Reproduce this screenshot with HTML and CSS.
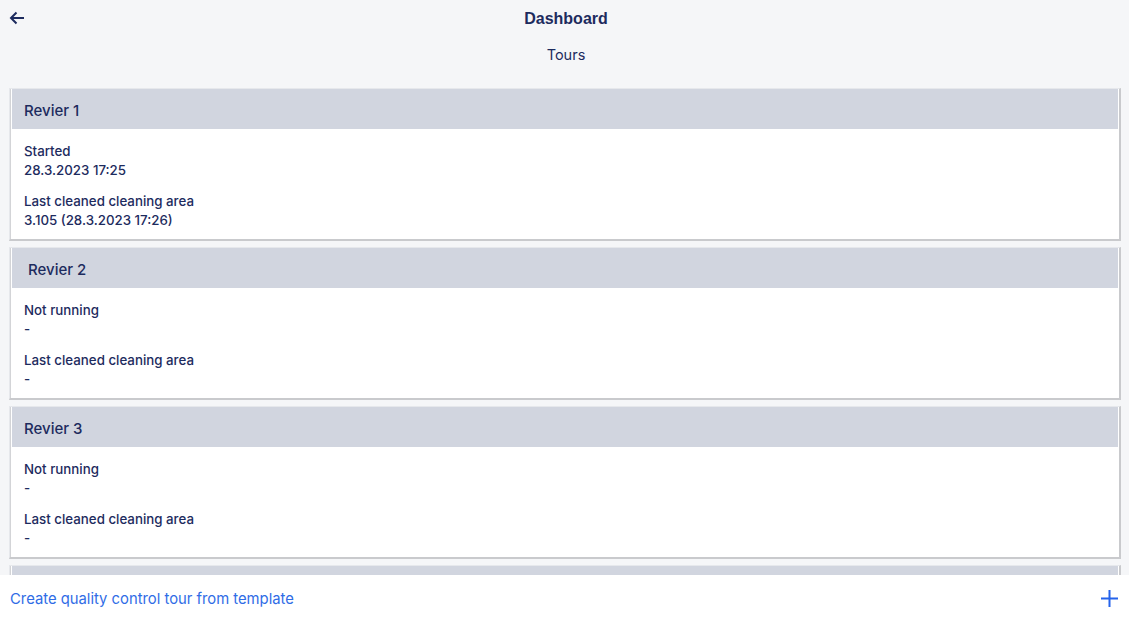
FILE: index.html
```html
<!DOCTYPE html>
<html lang="en">
<head>
    <meta charset="UTF-8">
    <meta name="viewport" content="width=device-width, initial-scale=1.0">
    <title>Dashboard</title>
    <link rel="stylesheet" href="styles.css">
</head>
<body>
<div class="topbar">
    <button class="back" aria-label="Back">
        <svg width="16" height="14" viewBox="0 0 16 14"><path d="M15 7H2M7.5 1.5L2 7l5.5 5.5" fill="none" stroke="#1d2b5e" stroke-width="2"/></svg>
    </button>
    <h1>Dashboard</h1>
</div>
<div class="subtitle">Tours</div>

<div class="list">
    <div class="card">
        <div class="card-head">Revier 1</div>
        <div class="card-body">
            <div class="field">
                <div>Started</div>
                <div>28.3.2023 17:25</div>
            </div>
            <div class="field">
                <div>Last cleaned cleaning area</div>
                <div>3.105 (28.3.2023 17:26)</div>
            </div>
        </div>
    </div>
    <div class="card">
        <div class="card-head shifted">Revier 2</div>
        <div class="card-body">
            <div class="field">
                <div>Not running</div>
                <div>-</div>
            </div>
            <div class="field">
                <div>Last cleaned cleaning area</div>
                <div>-</div>
            </div>
        </div>
    </div>
    <div class="card">
        <div class="card-head">Revier 3</div>
        <div class="card-body">
            <div class="field">
                <div>Not running</div>
                <div>-</div>
            </div>
            <div class="field">
                <div>Last cleaned cleaning area</div>
                <div>-</div>
            </div>
        </div>
    </div>
    <!-- next card is scrolled under the footer -->
    <div class="card">
        <div class="card-head"></div>
    </div>
</div>

<div class="footer">
    <a href="#" class="create">Create quality control tour from template</a>
    <button class="add" aria-label="Add">
        <svg width="17" height="17" viewBox="0 0 17 17"><path d="M8.5 0v17M0 8.5h17" fill="none" stroke="#2563eb" stroke-width="2"/></svg>
    </button>
</div>
</body>
</html>
```

FILE: styles.css
```css
body {
    font-family: Inter, "Noto Sans", sans-serif;
    background-color: #f5f6f8;
    color: #1d2b5e;
    margin: 0;
    padding: 0;
    height: 100vh;
    display: flex;
    flex-direction: column;
    overflow: hidden;
}

.topbar {
    position: relative;
    height: 37px;
    display: flex;
    align-items: center;
    justify-content: center;
}

.topbar h1 {
    margin: 0 0 0 3px;
    font-size: 16px;
    font-weight: 700;
    font-family: "Liberation Sans", Arial, sans-serif;
}

.back {
    position: absolute;
    left: 9px;
    top: 11px;
    background: none;
    border: none;
    padding: 0;
    cursor: pointer;
}

.subtitle {
    text-align: center;
    font-size: 14.5px;
    height: 34px;
    line-height: 36px;
    padding-left: 3px;
}

.list {
    flex: 1;
    overflow: hidden;
    padding: 17px 8px 0 9px;
    display: flex;
    flex-direction: column;
    gap: 6px;
}

.card {
    flex-shrink: 0;
    background: #ffffff;
    border-style: solid;
    border-width: 1px 2px 2px 1px;
    border-color: #e6e8ec #c9cacd #c9cacd #e6e8ec;
    padding: 0 0 0 2px;
    box-shadow: inset 1px 0 0 #d3d4d7;
}

.card-head {
    background-color: #d1d5df;
    height: 40px;
    line-height: 44px;
    padding-left: 12px;
    font-size: 15px;
    font-weight: 500;
    margin-right: 1px;
}

.card-head.shifted {
    padding-left: 16px;
}

.card-body {
    padding: 13px 12px 9px 12px;
    font-size: 13.3px;
    font-weight: 500;
    line-height: 19px;
}

.field + .field {
    margin-top: 12px;
}

.footer {
    flex-shrink: 0;
    height: 43px;
    box-sizing: border-box;
    background: #ffffff;
    display: flex;
    align-items: center;
    justify-content: space-between;
    padding: 4px 11px 0 10px;
}

.create {
    color: #2f6ce6;
    font-size: 14.8px;
    text-decoration: none;
}

.add {
    background: none;
    border: none;
    padding: 0;
    cursor: pointer;
    display: flex;
}
```
